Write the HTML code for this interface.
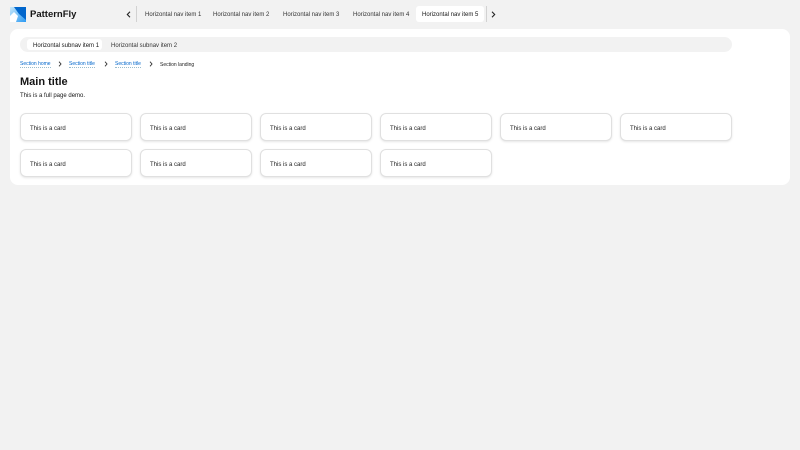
<!DOCTYPE html>
<html><head><meta charset="utf-8"><style>
*{box-sizing:border-box;margin:0;padding:0}
body{width:800px;height:450px;background:#f2f2f2;font-family:"Liberation Sans",sans-serif;color:#151515;position:relative;overflow:hidden}
.abs{position:absolute}
.nav{font-size:6px;color:#333;top:6px;height:16px;display:flex;align-items:center;white-space:nowrap;padding-top:2px}
.panel{left:10px;top:29px;width:780px;height:156px;background:#fff;border-radius:8px}
.sub{left:20px;top:37px;width:712px;height:15px;background:#f2f2f2;border-radius:8px}
.card{width:112px;height:28px;border:1px solid #e0e0e0;border-radius:6px;background:#fff;box-shadow:0 1px 2px rgba(0,0,0,.1);font-size:6px;display:flex;align-items:center;padding-left:9px;padding-top:3px;color:#222;white-space:nowrap}
.bc{font-size:5px;top:60px;height:9px;display:flex;align-items:center;white-space:nowrap}
.bl{color:#0066cc;border-bottom:1px dotted #9bc}
</style></head><body>
<svg class="abs" style="left:10px;top:7px" width="16" height="15" viewBox="0 0 16 15">
<defs><linearGradient id="g" x1="0" y1="0" x2="1" y2="1"><stop offset="0" stop-color="#c8e8fa"/><stop offset="1" stop-color="#2b9af3"/></linearGradient></defs>
<rect width="16" height="15" fill="url(#g)"/>
<path d="M4 0H16V13L9 7Z" fill="#0066cc"/>
<path d="M0 15V9L4 5L8 9L6 15Z" fill="#fff"/>
</svg>
<div class="abs" style="left:30px;top:8px;font-size:9.5px;font-weight:bold;line-height:13px">PatternFly</div>
<svg class="abs" style="left:126px;top:11px" width="5" height="7" viewBox="0 0 5 7"><path d="M4 0.7L1.3 3.5L4 6.3" fill="none" stroke="#222" stroke-width="1.1"/></svg>
<div class="abs" style="left:136px;top:6px;width:1px;height:16px;background:#d2d2d2"></div>
<div class="abs nav" style="left:145px">Horizontal nav item 1</div>
<div class="abs nav" style="left:213px">Horizontal nav item 2</div>
<div class="abs nav" style="left:283px">Horizontal nav item 3</div>
<div class="abs nav" style="left:353px">Horizontal nav item 4</div>
<div class="abs nav" style="left:416px;width:68px;background:#fff;border-radius:3px;padding-left:6px;color:#151515">Horizontal nav item 5</div>
<div class="abs" style="left:486px;top:6px;width:1px;height:16px;background:#d2d2d2"></div>
<svg class="abs" style="left:491px;top:11px" width="5" height="7" viewBox="0 0 5 7"><path d="M1 0.7L3.7 3.5L1 6.3" fill="none" stroke="#222" stroke-width="1.1"/></svg>
<div class="abs panel"></div>
<div class="abs sub"></div>
<div class="abs" style="left:27px;top:39px;width:75px;height:11px;background:#fff;border-radius:3px;font-size:6px;display:flex;align-items:center;padding-left:6px;padding-top:2px;white-space:nowrap">Horizontal subnav item 1</div>
<div class="abs" style="left:111px;top:39px;height:11px;font-size:6px;display:flex;align-items:center;padding-top:2px;color:#333;white-space:nowrap">Horizontal subnav item 2</div>
<div class="abs bc" style="left:20px"><span class="bl">Section home</span></div>
<svg class="abs" style="left:58px;top:61px" width="4" height="6" viewBox="0 0 4 6"><path d="M1 0.7L3 3L1 5.3" fill="none" stroke="#333" stroke-width="0.9"/></svg>
<div class="abs bc" style="left:69px"><span class="bl">Section title</span></div>
<svg class="abs" style="left:104px;top:61px" width="4" height="6" viewBox="0 0 4 6"><path d="M1 0.7L3 3L1 5.3" fill="none" stroke="#333" stroke-width="0.9"/></svg>
<div class="abs bc" style="left:115px"><span class="bl">Section title</span></div>
<svg class="abs" style="left:149px;top:61px" width="4" height="6" viewBox="0 0 4 6"><path d="M1 0.7L3 3L1 5.3" fill="none" stroke="#333" stroke-width="0.9"/></svg>
<div class="abs bc" style="left:160px;color:#222">Section landing</div>
<div class="abs" style="left:20px;top:75px;font-size:11px;font-weight:bold;line-height:14px">Main title</div>
<div class="abs" style="left:20px;top:92px;font-size:6px;line-height:8px;white-space:nowrap">This is a full page demo.</div>
<div class="abs card" style="left:20px;top:113px">This is a card</div>
<div class="abs card" style="left:140px;top:113px">This is a card</div>
<div class="abs card" style="left:260px;top:113px">This is a card</div>
<div class="abs card" style="left:380px;top:113px">This is a card</div>
<div class="abs card" style="left:500px;top:113px">This is a card</div>
<div class="abs card" style="left:620px;top:113px">This is a card</div>
<div class="abs card" style="left:20px;top:149px">This is a card</div>
<div class="abs card" style="left:140px;top:149px">This is a card</div>
<div class="abs card" style="left:260px;top:149px">This is a card</div>
<div class="abs card" style="left:380px;top:149px">This is a card</div>
</body></html>
